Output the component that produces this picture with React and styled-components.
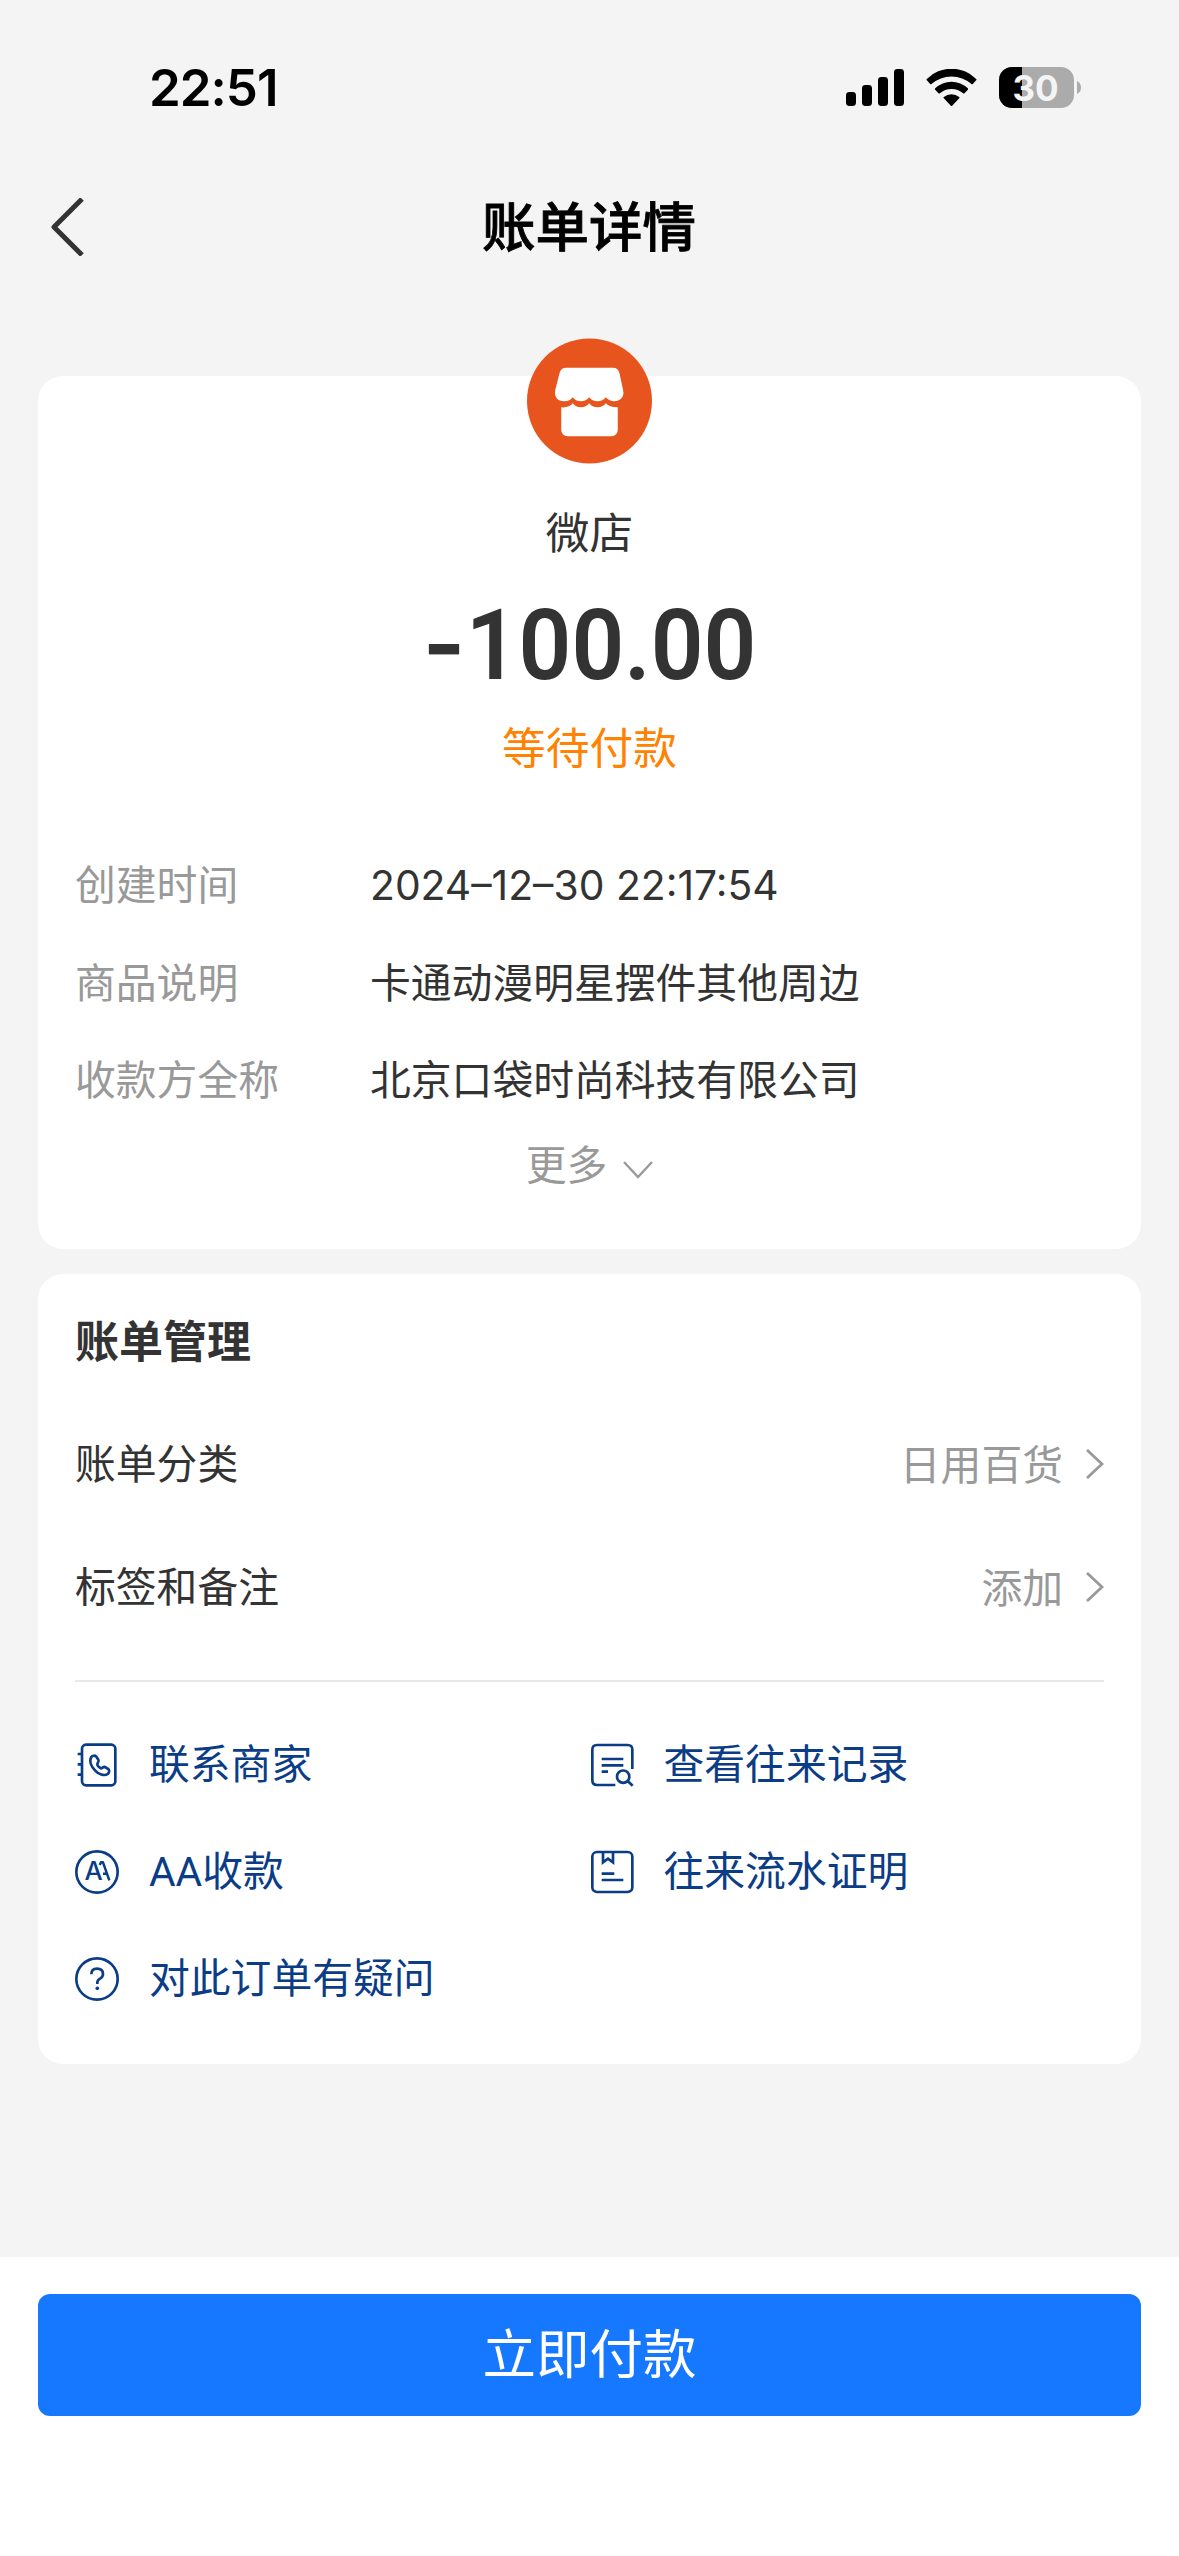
import React from "react";
import styled, { createGlobalStyle } from "styled-components";

const GlobalStyle = createGlobalStyle`
  * {
    box-sizing: border-box;
  }
  body {
    margin: 0;
    background: #f4f4f4;
    font-family: "Inter", "Noto Sans CJK SC", sans-serif;
    color: #333;
  }
`;

const Page = styled.div`
  display: flex;
  flex-direction: column;
  width: 1179px;
  height: 2556px;
  background: #f4f4f4;
`;

const StatusBar = styled.header`
  display: flex;
  align-items: center;
  justify-content: space-between;
  height: 175px;
  padding: 0 98px 0 149px;
  color: #000;
`;

const Clock = styled.span`
  font-size: 51px;
  font-weight: 600;
  line-height: 60px;
  letter-spacing: -1px;
`;

const StatusIcons = styled.div`
  display: flex;
  align-items: center;
  gap: 22px;

  svg {
    display: block;
  }
`;

const NavBar = styled.nav`
  display: grid;
  grid-template-columns: 200px 1fr 200px;
  align-items: center;
  height: 105px;
  padding: 0 51px 0 50px;

  svg {
    margin-top: -1px;
  }
`;

const NavTitle = styled.h1`
  margin: 0;
  text-align: center;
  font-size: 53.5px;
  font-weight: 500;
  line-height: 76px;
  color: #000;
  -webkit-text-stroke: 0.8px #000;
`;

const Content = styled.main`
  display: flex;
  flex-direction: column;
  gap: 25px;
  padding: 96px 38px 0;
`;

const Card = styled.section`
  height: ${(p) => p.$height}px;
  padding: 0 37px;
  border-radius: 25px;
  background: #fff;
`;

const Summary = styled.div`
  display: flex;
  flex-direction: column;
  align-items: center;
  margin-top: -38px;

  svg {
    display: block;
  }
`;

const Merchant = styled.div`
  margin-top: 40px;
  font-size: 43.7px;
  line-height: 60px;
`;

const Amount = styled.div`
  display: flex;
  align-items: baseline;
  margin-top: 29px;
  font-family: "Roboto", sans-serif;
  font-size: 99px;
  font-weight: 600;
  line-height: 100px;
  transform: scaleX(0.935);
`;

const Minus = styled.span`
  font-family: "Inter", sans-serif;
  font-weight: 600;
`;

const Status = styled.div`
  margin-top: 24px;
  font-size: 43.7px;
  line-height: 60px;
  color: #ff8200;
`;

const Details = styled.dl`
  margin: 58px 0 0;
`;

const DetailRow = styled.div`
  display: grid;
  grid-template-columns: 295px 1fr;
  height: 97.6px;
  font-size: 40.8px;
  line-height: 97.6px;

  dt {
    color: #999;
  }
  dd {
    margin: 0;
  }
`;

const More = styled.div`
  display: flex;
  align-items: center;
  justify-content: center;
  gap: 16px;
  margin-top: 5px;
  font-size: 40.8px;
  line-height: 60px;
  color: #999;

  svg {
    margin-top: 11px;
  }
`;

const CardTitle = styled.h2`
  margin: 0;
  padding-top: 38px;
  font-size: 44px;
  font-weight: 600;
  line-height: 60px;
`;

const SettingRows = styled.div`
  padding: 30px 0 32px;
  border-bottom: 2px solid #e8e8e8;
`;

const SettingRow = styled.div`
  display: flex;
  align-items: center;
  height: 123px;
  font-size: 40.8px;
`;

const SettingLabel = styled.span`
  padding-bottom: 4px;
`;

const SettingValue = styled.span`
  margin: 0 22px 0 auto;
  padding-bottom: 3px;
  color: #999;
`;

const Actions = styled.div`
  display: grid;
  grid-template-columns: 1fr 1fr;
  grid-auto-rows: 107px;
  padding-top: 29px;
`;

const Action = styled.a`
  display: flex;
  align-items: center;
  gap: 30px;
  font-family: "Roboto", "Noto Sans CJK SC", sans-serif;
  font-size: 40.8px;
  line-height: 60px;
  color: #0b3d86;
`;

const Footer = styled.footer`
  height: 299px;
  margin-top: auto;
  padding: 37px 38px 0;
  background: #fff;
`;

const PayButton = styled.button`
  display: block;
  width: 100%;
  height: 122px;
  padding: 0;
  border: 0;
  border-radius: 12px;
  background: #1677ff;
  color: #fff;
  font-family: inherit;
  font-size: 53.5px;
  line-height: 122px;
`;

const SignalIcon = () => (
  <svg width="58" height="37" viewBox="0 0 58 37">
    <rect x="0" y="23" width="10" height="14" rx="3.4" />
    <rect x="16" y="16" width="10" height="21" rx="3.4" />
    <rect x="32" y="8" width="10" height="29" rx="3.4" />
    <rect x="48" y="0" width="10" height="37" rx="3.4" />
  </svg>
);

const WifiIcon = () => (
  <svg width="51" height="37" viewBox="-1 0 152 111">
    <path d="M1 30A104 104 0 0 1 149 30Q151 32 149 34L139 45Q137 47 135 45A92 92 0 0 0 15 45Q13 47 11 45L1 34Q-1 32 1 30Z" />
    <path d="M26 58A70 70 0 0 1 124 58Q126 60 124 62L114 73Q112 75 110 73A54 54 0 0 0 40 73Q38 75 36 73L26 62Q24 60 26 58Z" />
    <path d="M52 84A35 35 0 0 1 98 84Q100 86 98 88L77 110Q75 112 73 110L52 88Q50 86 52 84Z" />
  </svg>
);

const BatteryIcon = () => (
  <svg width="82" height="41" viewBox="0 0 82 41">
    <clipPath id="battery">
      <rect width="75" height="41" rx="13" />
    </clipPath>
    <g clipPath="url(#battery)">
      <rect width="75" height="41" fill="#ababab" />
      <rect width="23" height="41" />
    </g>
    <path d="M78 14Q82 16 82 20.5T78 27Z" fill="#ababab" />
    <text
      x="36.5"
      y="33.5"
      fontSize="35"
      fontWeight="700"
      textAnchor="middle"
      fill="#f4f4f4"
    >
      30
    </text>
  </svg>
);

const BackIcon = () => (
  <svg width="35" height="58" viewBox="0 0 35 58" fill="none">
    <path d="M32 1L4 29L32 57" stroke="#333" strokeWidth="5" strokeLinejoin="round" />
  </svg>
);

const ShopLogo = () => (
  <svg width="125" height="126" viewBox="0 0 376 376">
    <circle cx="188" cy="188" r="188" fill="#e8541e" />
    <g fill="#fff">
      <path d="M118 88H258Q274 88 278 104L289 155Q293 172 282 182Q272 190 260 189Q246 188 237 177Q228 189 212 189Q196 189 187 177Q178 189 162 189Q146 189 138 177Q128 189 114 189Q100 190 91 182Q82 172 85 155L98 104Q102 88 118 88Z" />
      <path d="M103 207Q126 209 138 195Q146 207 162 207Q178 207 187 195Q196 207 212 207Q228 207 237 195Q250 208 273 207V274Q273 294 253 294H123Q103 294 103 274Z" />
    </g>
  </svg>
);

const ArrowRight = () => (
  <svg width="19" height="30" viewBox="0 0 19 30" fill="none">
    <path d="M2 1L17 15L2 29" stroke="#999" strokeWidth="2.8" />
  </svg>
);

const ArrowDown = () => (
  <svg width="30" height="18" viewBox="0 0 30 18" fill="none">
    <path d="M1 1L15 16L29 1" stroke="#999" strokeWidth="2.4" />
  </svg>
);

const LineIcon = ({ children }) => (
  <svg
    width="44"
    height="44"
    viewBox="0 0 132 132"
    fill="none"
    stroke="currentColor"
    strokeWidth="8"
  >
    {children}
  </svg>
);

const ContactIcon = () => (
  <LineIcon>
    <rect x="21" y="5" width="100" height="122" rx="12" />
    <path d="M8 33H24M8 64H24M8 95H24" />
    <path d="M49 42C52 37 60 37 64 41L70 50C73 55 68 59 67 63C66 68 74 75 78 76C82 76 85 70 90 72L100 78C104 82 103 90 98 93C88 100 70 94 60 82C48 70 42 54 49 42Z" />
  </LineIcon>
);

const RecordIcon = () => (
  <LineIcon>
    <path d="M127 78V20Q127 6 113 6H21Q7 6 7 20V112Q7 126 21 126H76" />
    <path d="M35 48H100M35 67H100M35 86H54" />
    <circle cx="99.5" cy="101" r="18.5" />
    <path d="M113 114L128 128" />
  </LineIcon>
);

const SplitIcon = () => (
  <LineIcon>
    <circle cx="66" cy="66" r="62" />
    <text
      x="56"
      y="91"
      textAnchor="middle"
      fontFamily="Inter"
      fontSize="77"
      fontWeight="500"
      fill="currentColor"
      stroke="none"
    >
      A
    </text>
    <path d="M74 45L78 37L84 37L103 91M84 71H94" strokeWidth="7.5" strokeLinejoin="round" />
  </LineIcon>
);

const ProofIcon = () => (
  <LineIcon>
    <rect x="7" y="6" width="120" height="120" rx="14" />
    <path d="M39 6V37L54 26L69 37V6" />
    <path d="M35 71H73M35 90H100" />
  </LineIcon>
);

const QuestionIcon = () => (
  <LineIcon>
    <circle cx="66" cy="66" r="62" />
    <path d="M49 52Q49 35 66 35Q84 35 84 51Q84 60 75 65Q67 69 67 77V81" />
    <circle cx="67" cy="94" r="5.5" fill="currentColor" stroke="none" />
  </LineIcon>
);

const details = [
  { label: "创建时间", value: "2024–12–30 22:17:54" },
  { label: "商品说明", value: "卡通动漫明星摆件其他周边" },
  { label: "收款方全称", value: "北京口袋时尚科技有限公司" },
];

const settings = [
  { label: "账单分类", value: "日用百货" },
  { label: "标签和备注", value: "添加" },
];

const actions = [
  { label: "联系商家", Icon: ContactIcon },
  { label: "查看往来记录", Icon: RecordIcon },
  { label: "AA收款", Icon: SplitIcon },
  { label: "往来流水证明", Icon: ProofIcon },
  { label: "对此订单有疑问", Icon: QuestionIcon },
];

function App() {
  return (
    <>
      <GlobalStyle />
      <Page>
        <StatusBar>
          <Clock>22:51</Clock>
          <StatusIcons>
            <SignalIcon />
            <WifiIcon />
            <BatteryIcon />
          </StatusIcons>
        </StatusBar>
        <NavBar>
          <BackIcon />
          <NavTitle>账单详情</NavTitle>
        </NavBar>

        <Content>
          <Card $height={873}>
            <Summary>
              <ShopLogo />
              <Merchant>微店</Merchant>
              <Amount>
                <Minus>-</Minus>100.00
              </Amount>
              <Status>等待付款</Status>
            </Summary>
            <Details>
              {details.map(({ label, value }) => (
                <DetailRow key={label}>
                  <dt>{label}</dt>
                  <dd>{value}</dd>
                </DetailRow>
              ))}
            </Details>
            <More>
              更多
              <ArrowDown />
            </More>
          </Card>

          <Card $height={790}>
            <CardTitle>账单管理</CardTitle>
            <SettingRows>
              {settings.map(({ label, value }) => (
                <SettingRow key={label}>
                  <SettingLabel>{label}</SettingLabel>
                  <SettingValue>{value}</SettingValue>
                  <ArrowRight />
                </SettingRow>
              ))}
            </SettingRows>
            <Actions>
              {actions.map(({ label, Icon }) => (
                <Action key={label}>
                  <Icon />
                  {label}
                </Action>
              ))}
            </Actions>
          </Card>
        </Content>

        <Footer>
          <PayButton>立即付款</PayButton>
        </Footer>
      </Page>
    </>
  );
}

export default App;
